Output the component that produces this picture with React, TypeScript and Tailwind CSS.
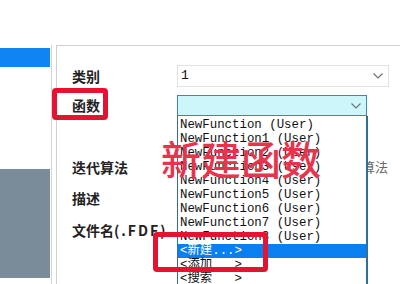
import React from 'react';

const cjk = "font-['Noto_Sans_CJK_SC',sans-serif]";
const mono = "font-['Liberation_Mono','Noto_Sans_CJK_SC',monospace]";

const items: string[] = [
  'NewFunction (User)',
  'NewFunction1 (User)',
  'NewFunction2 (User)',
  'NewFunction3 (User)',
  'NewFunction4 (User)',
  'NewFunction5 (User)',
  'NewFunction6 (User)',
  'NewFunction7 (User)',
  'NewFunction8 (User)',
  '<新建...>',
  '<添加   >',
  '<搜索   >',
];

const Chevron: React.FC = () => (
  <svg width="12" height="8" viewBox="0 0 12 8" fill="none">
    <path d="M1.5 1.5 L6 6 L10.5 1.5" stroke="#6b7280" strokeWidth="1.2" />
  </svg>
);

const Label: React.FC<{ text: string }> = ({ text }) => (
  <div className={`w-[120px] shrink-0 pl-[15px] text-[14px] font-bold text-[#222] ${cjk}`}>{text}</div>
);

export default function App() {
  return (
    <div className="relative w-[400px] h-[284px] overflow-hidden bg-white">
      <div className="h-[45px]" />
      <div className="flex h-[239px]">
        {/* left tree panel */}
        <div className="flex w-[52px] flex-col border-r border-[#d4d4d4] pt-[3px] pb-[6px]">
          <div className="h-[19px] w-[50px] bg-[#1184f4]" />
          <div className="flex-1" />
          <div className="h-[109px] w-[50px] bg-[#7a8c99]" />
        </div>
        <div className="w-[4px]" />
        {/* properties panel */}
        <div className="flex-1 border-l border-t border-[#cfcfcf] pt-[19px]">
          <div className="flex h-[22px] items-center">
            <Label text="类别" />
            <div className="flex h-[22px] w-[212px] shrink-0 items-center justify-between border border-[#e2e2e2] bg-white pl-[3px] pr-[4px]">
              <span className={`text-[13px] text-[#111] ${mono}`}>1</span>
              <Chevron />
            </div>
          </div>
          <div className="mt-[8px] flex h-[21px] items-center">
            <Label text="函数" />
            <div className="flex h-[21px] w-[190px] shrink-0 items-center justify-end border border-[#3c86b8] bg-[#cdf6fb] pr-[4px]">
              <Chevron />
            </div>
          </div>
          <div className="mt-[41px] flex h-[20px] items-center">
            <Label text="迭代算法" />
            <div className={`ml-[159px] whitespace-nowrap text-[13px] text-[#666] ${cjk}`}>迭代算法</div>
          </div>
          <div className="mt-[11px] flex h-[20px] items-center">
            <Label text="描述" />
          </div>
          <div className="mt-[12px] flex h-[20px] items-center">
            <div className={`w-[120px] pl-[15px] text-[14px] font-bold text-[#222] ${cjk} whitespace-nowrap`}>
              文件名<span className="tracking-[2px]">(.FDF)</span>
            </div>
          </div>
        </div>
      </div>

      {/* open drop-down list */}
      <div className="absolute left-[177px] top-[116px] h-[170px] w-[191px] border-l border-r-2 border-[#2f6f9a] bg-white pt-[2px]">
        {items.map((it, i) => (
          <div
            key={i}
            className={`flex h-[14px] items-center whitespace-pre pl-[2px] text-[12.4px] leading-[14px] ${mono} ${
              i === 9 ? 'bg-[#0a7ff0] text-white' : 'text-[#111]'
            }`}
          >
            {it}
          </div>
        ))}
      </div>

      {/* annotations */}
      <div className="absolute left-[52px] top-[88px] h-[32px] w-[56px] rounded-[4px] border-[5px] border-[#e5132f]" />
      <div className="absolute left-[153px] top-[232px] h-[40px] w-[115px] rounded-[4px] border-[5px] border-[#e5132f]" />
      <div className={`absolute left-[161px] top-[134px] text-[40px] font-medium leading-[48px] text-[#e8334c] ${cjk}`}>新建函数</div>
    </div>
  );
}
